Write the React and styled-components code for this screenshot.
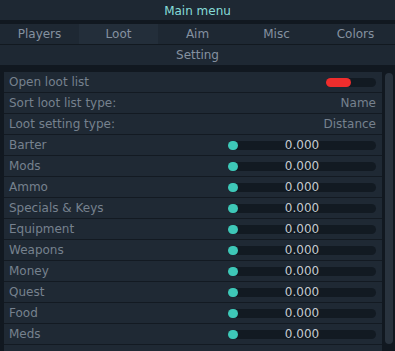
import styled, { createGlobalStyle } from "styled-components";

const GlobalStyle = createGlobalStyle`
  html, body {
    margin: 0;
    padding: 0;
    background: #111820;
  }
  body {
    font-family: "DejaVu Sans", "Liberation Sans", sans-serif;
  }
`;

const Window = styled.div`
  width: 395px;
  height: 351px;
  background: #111820;
  overflow: hidden;
  display: flex;
  flex-direction: column;
`;

const TitleBar = styled.div`
  height: 20px;
  padding-top: 1px;
  box-sizing: border-box;
  background: #1e2833;
  color: #86dcd8;
  font-size: 12px;
  display: flex;
  align-items: center;
  justify-content: center;
  margin-bottom: 4px;
`;

const Tabs = styled.div`
  display: grid;
  grid-template-columns: repeat(5, 1fr);
  height: 20px;
  background: #1e2833;
  border-bottom: 1px solid #121920;
`;

const Tab = styled.div`
  display: flex;
  align-items: center;
  justify-content: center;
  font-size: 12px;
  color: #8591a0;
  background: ${({ active }) => (active ? "#232e3a" : "transparent")};
`;

const SubHeader = styled.div`
  height: 20px;
  background: #1e2833;
  color: #8591a0;
  font-size: 12px;
  display: flex;
  align-items: center;
  justify-content: center;
  margin-bottom: 6px;
`;

const Body = styled.div`
  flex: 1;
  display: flex;
  padding-left: 4px;
  gap: 3px;
  min-height: 0;
`;

const List = styled.div`
  flex: 1;
  display: flex;
  flex-direction: column;
  padding-top: 1px;
`;

const Row = styled.div`
  height: 20px;
  flex-shrink: 0;
  background: #1f2934;
  border-bottom: 1px solid #131a22;
  display: flex;
  align-items: center;
  padding: 0 6px 0 5px;
  font-size: 12px;
  color: #76818e;
`;

const Label = styled.span`
  flex: 1;
`;

const Value = styled.span`
  color: #76818e;
`;

const Track = styled.div`
  position: relative;
  width: ${({ width }) => width}px;
  height: 9px;
  border-radius: 5px;
  background: #121a22;
  display: flex;
  align-items: center;
`;

const Fill = styled.div`
  width: 25px;
  height: 9px;
  border-radius: 5px;
  background: #ef2d2d;
`;

const Knob = styled.div`
  width: 10px;
  height: 9px;
  border-radius: 5px;
  background: #3ec8b8;
`;

const SliderValue = styled.span`
  position: absolute;
  left: 0;
  right: 0;
  top: 50%;
  transform: translateY(-50%);
  text-align: center;
  color: #c4cad0;
  font-size: 12px;
  line-height: 1;
`;

const ScrollBar = styled.div`
  width: 8px;
  margin: 2px 2px 7px 0;
  border-radius: 4px;
  background: #29333e;
`;

const tabs = ["Players", "Loot", "Aim", "Misc", "Colors"];
const sliders = [
  "Barter",
  "Mods",
  "Ammo",
  "Specials & Keys",
  "Equipment",
  "Weapons",
  "Money",
  "Quest",
  "Food",
  "Meds",
];

export default function App() {
  return (
    <>
      <GlobalStyle />
      <Window>
        <TitleBar>Main menu</TitleBar>
        <Tabs>
          {tabs.map((t) => (
            <Tab key={t} active={t === "Loot"}>
              {t}
            </Tab>
          ))}
        </Tabs>
        <SubHeader>Setting</SubHeader>
        <Body>
          <List>
            <Row>
              <Label>Open loot list</Label>
              <Track width={50}>
                <Fill />
              </Track>
            </Row>
            <Row>
              <Label>Sort loot list type:</Label>
              <Value>Name</Value>
            </Row>
            <Row>
              <Label>Loot setting type:</Label>
              <Value>Distance</Value>
            </Row>
            {sliders.map((s) => (
              <Row key={s}>
                <Label>{s}</Label>
                <Track width={148}>
                  <Knob />
                  <SliderValue>0.000</SliderValue>
                </Track>
              </Row>
            ))}
            <Row />
          </List>
          <ScrollBar />
        </Body>
      </Window>
    </>
  );
}
